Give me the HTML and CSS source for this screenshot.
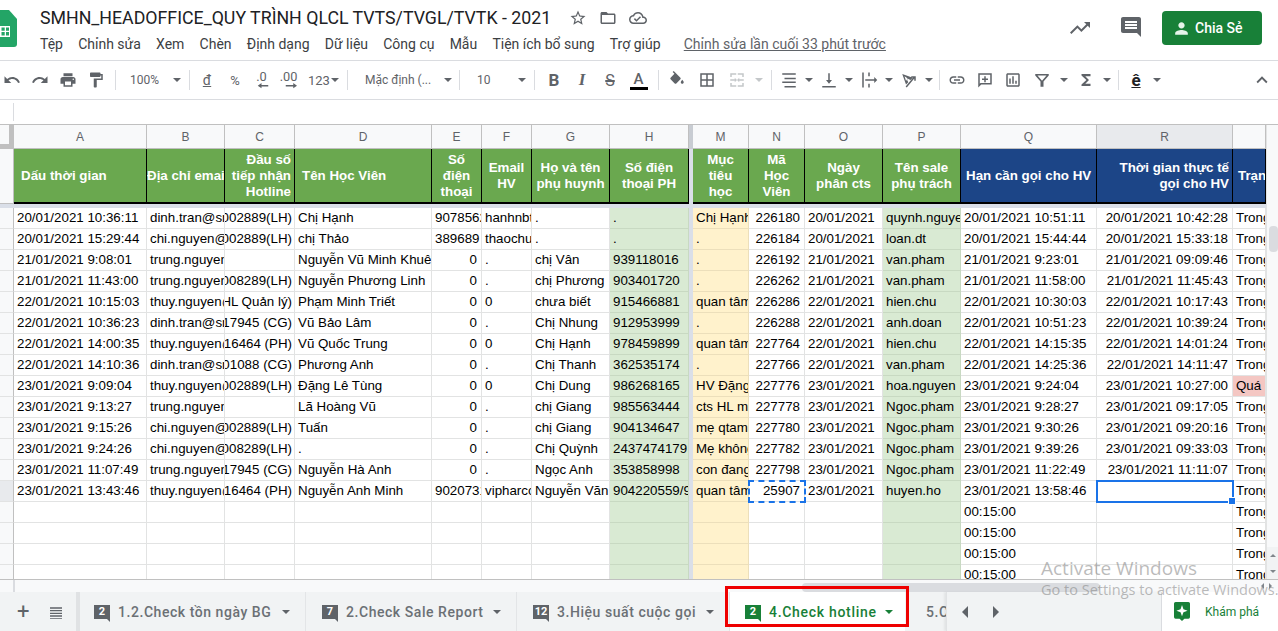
FILE: index.html
```html
<!DOCTYPE html>
<html lang="vi">
<head>
  <meta charset="UTF-8">
  <title>SMHN_HEADOFFICE_QUY TRÌNH QLCL TVTS/TVGL/TVTK - 2021</title>
  <link rel="stylesheet" href="styles.css">
</head>
<body>
  <!-- thanh tiêu đề -->
  <header class="top">
    <svg class="logo" viewBox="8 0 17 37"><path fill="#23a566" d="M3 0h14l8 9v25a3 3 0 0 1-3 3H3a3 3 0 0 1-3-3V3a3 3 0 0 1 3-3z"/><path fill="#fff" d="M8 16h10v11H8z"/><path fill="#23a566" d="M9.500 17.500h3.200v3.200H9.500zM14 17.500h3v3.200h-3zM9.500 22h3.200v3.500H9.500zM14 22h3v3.500h-3z"/></svg>
    <div class="titles">
      <div class="title-row">
        <span class="doc-title">SMHN_HEADOFFICE_QUY TRÌNH QLCL TVTS/TVGL/TVTK - 2021</span>
        <svg class="t-icon t-star" viewBox="0 0 24 24"><path d="M22 9.240l-7.190-.62L12 2 9.190 8.630 2 9.240l5.460 4.730L5.820 21 12 17.270 18.180 21l-1.630-7.030L22 9.240zM12 15.400l-3.760 2.270 1-4.280-3.320-2.880 4.380-.38L12 6.100l1.710 4.040 4.380.38-3.320 2.880 1 4.280L12 15.400z"/></svg>
        <svg class="t-icon" viewBox="0 0 24 24"><path d="M20 6h-8l-2-2H4c-1.100 0-1.990.9-1.990 2L2 18c0 1.100.9 2 2 2h16c1.100 0 2-.9 2-2V8c0-1.100-.9-2-2-2zm0 12H4V8h16v10z"/></svg>
        <svg class="t-icon" viewBox="0 0 24 24"><path d="M19.350 10.040C18.670 6.590 15.640 4 12 4 9.110 4 6.600 5.640 5.350 8.040 2.340 8.360 0 10.910 0 14c0 3.310 2.690 6 6 6h13c2.760 0 5-2.240 5-5 0-2.640-2.050-4.780-4.650-4.960zM19 18H6c-2.210 0-4-1.790-4-4 0-2.050 1.530-3.760 3.560-3.970l1.070-.11.5-.95C8.080 7.140 9.940 6 12 6c2.620 0 4.880 1.860 5.390 4.430l.3 1.500 1.530.11c1.560.1 2.780 1.410 2.780 2.960 0 1.650-1.350 3-3 3zm-9-3.820l-2.090-2.090L6.500 13.500 10 17l6.010-6.010-1.410-1.410z"/></svg>
      </div>
      <nav class="menu">
        <span>Tệp</span><span>Chỉnh sửa</span><span>Xem</span><span>Chèn</span><span>Định dạng</span><span>Dữ liệu</span><span>Công cụ</span><span>Mẫu</span><span>Tiện ích bổ sung</span><span>Trợ giúp</span>
        <a class="last-edit">Chỉnh sửa lần cuối 33 phút trước</a>
      </nav>
    </div>
    <div class="actions">
      <svg class="a-icon" viewBox="0 0 24 24"><path d="M16 6l2.290 2.290-4.880 4.880-4-4L2 16.590 3.410 18l6-6 4 4 6.300-6.290L22 12V6z"/></svg>
      <svg class="a-icon a-comment" viewBox="0 0 24 24"><path d="M21.990 4c0-1.100-.89-2-1.990-2H4c-1.100 0-2 .9-2 2v12c0 1.100.9 2 2 2h14l4 4-.01-18zM18 14H6v-2h12v2zm0-3H6V9h12v2zm0-3H6V6h12v2z"/></svg>
      <button class="share"><svg viewBox="0 0 24 24"><path d="M12 12c2.210 0 4-1.790 4-4s-1.790-4-4-4-4 1.790-4 4 1.790 4 4 4zm0 2c-2.670 0-8 1.340-8 4v2h16v-2c0-2.660-5.330-4-8-4z"/></svg>Chia Sẻ</button>
    </div>
  </header>

  <!-- thanh công cụ -->
  <div class="toolbar">
    <span class="tb"><svg viewBox="0 0 24 24"><path d="M12.500 8c-2.650 0-5.050.99-6.900 2.600L2 7v9h9l-3.620-3.620c1.390-1.160 3.160-1.880 5.120-1.880 3.540 0 6.550 2.310 7.600 5.500l2.370-.78C21.080 11.030 17.150 8 12.500 8z"/></svg></span>
    <span class="tb"><svg viewBox="0 0 24 24"><path d="M18.400 10.600C16.550 8.990 14.150 8 11.500 8c-4.650 0-8.580 3.030-9.960 7.220L3.900 16c1.050-3.190 4.050-5.500 7.600-5.500 1.950 0 3.730.72 5.120 1.880L13 16h9V7l-3.600 3.600z"/></svg></span>
    <span class="tb"><svg viewBox="0 0 24 24"><path d="M19 8H5c-1.660 0-3 1.340-3 3v6h4v4h12v-4h4v-6c0-1.660-1.340-3-3-3zm-3 11H8v-5h8v5zm3-7c-.55 0-1-.45-1-1s.45-1 1-1 1 .45 1 1-.45 1-1 1zm-1-9H6v4h12V3z"/></svg></span>
    <span class="tb"><svg viewBox="0 0 24 24"><path d="M18 4V3c0-.55-.45-1-1-1H5c-.55 0-1 .45-1 1v4c0 .55.45 1 1 1h12c.55 0 1-.45 1-1V6h1v4H9v11c0 .55.45 1 1 1h2c.55 0 1-.45 1-1v-9h8V4h-3z"/></svg></span>
    <i class="sep"></i>
    <span class="tb-txt tb-zoom">100%</span><i class="car"></i>
    <i class="sep"></i>
    <span class="tb tb-letter tb-dong">đ</span>
    <span class="tb tb-letter">%</span>
    <span class="tb"><svg class="dec" viewBox="0 0 24 24"><text x="3" y="13">.0</text><path d="M9 18.500h10v2H9zM5 19.500l5-3.500v7z"/></svg></span>
    <span class="tb"><svg class="dec" viewBox="0 0 24 24"><text x="-3" y="13">.00</text><path d="M5 18.500h10v2H5zM20 19.500l-5-3.500v7z"/></svg></span>
    <span class="tb-txt tb-fmt">123<i class="car-in"></i></span>
    <i class="sep"></i>
    <span class="tb-txt tb-font">Mặc định (...</span><i class="car"></i>
    <i class="sep sep-s"></i>
    <span class="tb-txt tb-size">10</span><i class="car"></i>
    <i class="sep sep-wide"></i>
    <span class="tb tb-letter tb-b">B</span>
    <span class="tb tb-letter tb-i">I</span>
    <span class="tb tb-letter tb-s">S</span>
    <span class="tb tb-letter tb-a"><b>A</b></span>
    <i class="sep"></i>
    <span class="tb tb30"><svg viewBox="0 0 24 24"><path d="M16.560 8.940L7.620 0 6.210 1.410l2.380 2.380-5.150 5.150c-.59.59-.59 1.540 0 2.120l5.500 5.500c.29.29.68.44 1.060.44s.77-.15 1.060-.44l5.500-5.500c.59-.58.59-1.530 0-2.120zM19 11.500s-2 2.170-2 3.500c0 1.100.9 2 2 2s2-.9 2-2c0-1.330-2-3.500-2-3.500z"/></svg></span>
    <span class="tb tb30"><svg viewBox="0 0 24 24"><path d="M3 3v18h18V3H3zm8 16H5v-6h6v6zm0-8H5V5h6v6zm8 8h-6v-6h6v6zm0-8h-6V5h6v6z"/></svg></span>
    <span class="tb tb30 off"><svg viewBox="0 0 24 24"><path d="M3 3h8v2H5v3H3zM13 3h8v5h-2V5h-6zM3 16h2v3h6v2H3zM19 16h2v5h-8v-2h6zM3 11h6V9l3 3-3 3v-2H3zM21 13h-6v2l-3-3 3-3v2h6z"/></svg></span><i class="car off"></i>
    <i class="sep"></i>
    <span class="tb"><svg viewBox="0 0 24 24"><path d="M3 3h18v2H3zM6 9h15v2H6zM3 14h18v2H3zM6 20h15v2H6z"/></svg></span><i class="car car-s"></i>
    <span class="tb"><svg viewBox="0 0 24 24"><path d="M3 20h18v2H3zM11 3h2v9h3l-4 5-4-5h3z"/></svg></span><i class="car car-s"></i>
    <span class="tb"><svg viewBox="0 0 24 24"><path d="M3 2h2v20H3zM11 2h2v5h-2zM11 17h2v5h-2zM7 11h12V8l4 4-4 4v-3H7z"/></svg></span><i class="car car-s"></i>
    <span class="tb"><svg viewBox="0 0 24 24"><path d="M3 4l14 5-3 3-4-2-1 1 2 4-3 3zM6 7l2 6 2-2-1-2zM21 7v6h-2V10L9 22l-1.500-1.500L17.500 8.500H15V7z"/></svg></span><i class="car car-s"></i>
    <i class="sep sep-s"></i>
    <span class="tb"><svg viewBox="0 0 24 24"><path d="M3.900 12c0-1.710 1.390-3.100 3.100-3.100h4V7H7c-2.760 0-5 2.240-5 5s2.240 5 5 5h4v-1.900H7c-1.710 0-3.100-1.390-3.100-3.100zM8 13h8v-2H8v2zm9-6h-4v1.900h4c1.710 0 3.100 1.390 3.100 3.100s-1.390 3.100-3.100 3.100h-4V17h4c2.760 0 5-2.240 5-5s-2.240-5-5-5z"/></svg></span>
    <span class="tb"><svg viewBox="0 0 24 24"><path d="M3 3h18v15H7l-4 4zm2 2v12l1-1h13V5zM11 7h2v3h3v2h-3v3h-2v-3H8v-2h3z"/></svg></span>
    <span class="tb"><svg viewBox="0 0 24 24"><path d="M19 3H5c-1.100 0-2 .9-2 2v14c0 1.100.9 2 2 2h14c1.100 0 2-.9 2-2V5c0-1.100-.9-2-2-2zm0 16H5V5h14v14zM7 10h2v7H7zM11 7h2v10h-2zM15 13h2v4h-2z"/></svg></span>
    <span class="tb tb30"><svg viewBox="0 0 24 24"><path d="M3 4h18v2l-7 8v7h-4v-7L3 6zm3 2l6 7 6-7z"/></svg></span><i class="car"></i>
    <span class="tb tb30"><svg viewBox="0 0 24 24"><path d="M18 4H6v2l6.500 6L6 18v2h12v-3h-7l5-5-5-5h7z"/></svg></span><i class="car car-s"></i>
    <i class="sep"></i>
    <span class="tb tb-letter tb-e">ê</span><i class="car"></i>
    <span class="tb tb-up"><svg viewBox="0 0 24 24"><path d="M12 8l-6 6 1.410 1.410L12 10.830l4.590 4.580L18 14z"/></svg></span>
  </div>

  <div class="formula"><i></i></div>

  <!-- bảng tính -->
  <main class="sheet-wrap">
    <div class="grid">
      <table class="sheet">
        <colgroup>
          <col class="c-h"><col class="c-a"><col class="c-b"><col class="c-c"><col class="c-d"><col class="c-e"><col class="c-f"><col class="c-g"><col class="c-hh"><col class="c-z"><col class="c-m"><col class="c-n"><col class="c-o"><col class="c-p"><col class="c-q"><col class="c-r"><col class="c-s">
        </colgroup>
        <tr class="letters">
          <th class="corner"></th><th>A</th><th>B</th><th>C</th><th>D</th><th>E</th><th>F</th><th>G</th><th>H</th><th class="fz"></th><th>M</th><th>N</th><th>O</th><th>P</th><th>Q</th><th class="on">R</th><th></th>
        </tr>
        <tr class="heads">
          <td class="rh"></td>
          <td class="hg"><div class="l pl7">Dấu thời gian</div></td>
          <td class="hg"><div class="l">Địa chỉ email</div></td>
          <td class="hg"><div class="rt">Đầu số tiếp nhận Hotline</div></td>
          <td class="hg"><div class="l pl7">Tên Học Viên</div></td>
          <td class="hg"><div>Số<br>điện<br>thoại<br>HV</div></td>
          <td class="hg"><div>Email<br>HV</div></td>
          <td class="hg"><div>Họ và tên phụ huynh</div></td>
          <td class="hg"><div>Số điện thoại PH</div></td>
          <td class="fz"></td>
          <td class="hg"><div>Mục<br>tiêu<br>học<br>tập</div></td>
          <td class="hg"><div>Mã<br>Học<br>Viên</div></td>
          <td class="hg"><div>Ngày<br>phân cts</div></td>
          <td class="hg"><div>Tên sale phụ trách</div></td>
          <td class="hb"><div class="l pl5">Hạn cần gọi cho HV</div></td>
          <td class="hb"><div class="rt">Thời gian thực tế gọi cho HV</div></td>
          <td class="hb"><div class="l pl5">Trạng thái</div></td>
        </tr>
        <tr class="gap"><td colspan="17"></td></tr>
        <tr><td class="rh"></td><td>20/01/2021 10:36:11</td><td>dinh.tran@smartcare.vn</td><td class="cl"><bdi>19002889(LH)</bdi></td><td>Chị Hạnh</td><td>907856231</td><td>hanhnbt88@gmail.com</td><td>.</td><td class="g">.</td><td class="fz"></td><td class="y">Chị Hạnh muốn</td><td class="n">226180</td><td>20/01/2021</td><td class="g">quynh.nguyen</td><td>20/01/2021 10:51:11</td><td class="n">20/01/2021 10:42:28</td><td>Trong hạn</td></tr>
        <tr><td class="rh"></td><td>20/01/2021 15:29:44</td><td>chi.nguyen@smartcare.vn</td><td class="cl"><bdi>19002889(LH)</bdi></td><td>chị Thảo</td><td>389689</td><td>thaochu12@gmail.com</td><td>.</td><td class="g">.</td><td class="fz"></td><td class="y">.</td><td class="n">226184</td><td>20/01/2021</td><td class="g">loan.dt</td><td>20/01/2021 15:44:44</td><td class="n">20/01/2021 15:33:18</td><td>Trong hạn</td></tr>
        <tr><td class="rh"></td><td>21/01/2021 9:08:01</td><td>trung.nguyen@smartcare.vn</td><td></td><td>Nguyễn Vũ Minh Khuê</td><td class="n">0</td><td>.</td><td>chị Vân</td><td class="g">939118016</td><td class="fz"></td><td class="y">.</td><td class="n">226192</td><td>21/01/2021</td><td class="g">van.pham</td><td>21/01/2021 9:23:01</td><td class="n">21/01/2021 09:09:46</td><td>Trong hạn</td></tr>
        <tr><td class="rh"></td><td>21/01/2021 11:43:00</td><td>trung.nguyen@smartcare.vn</td><td class="cl"><bdi>19008289(LH)</bdi></td><td>Nguyễn Phương Linh</td><td class="n">0</td><td>.</td><td>chị Phương</td><td class="g">903401720</td><td class="fz"></td><td class="y">.</td><td class="n">226262</td><td>21/01/2021</td><td class="g">van.pham</td><td>21/01/2021 11:58:00</td><td class="n">21/01/2021 11:45:43</td><td>Trong hạn</td></tr>
        <tr><td class="rh"></td><td>22/01/2021 10:15:03</td><td>thuy.nguyen@smartcare.vn</td><td class="cl"><bdi>Hotline HL Quản lý)</bdi></td><td>Phạm Minh Triết</td><td class="n">0</td><td>0</td><td>chưa biết</td><td class="g">915466881</td><td class="fz"></td><td class="y">quan tâm khóa</td><td class="n">226286</td><td>22/01/2021</td><td class="g">hien.chu</td><td>22/01/2021 10:30:03</td><td class="n">22/01/2021 10:17:43</td><td>Trong hạn</td></tr>
        <tr><td class="rh"></td><td>22/01/2021 10:36:23</td><td>dinh.tran@smartcare.vn</td><td class="cl"><bdi>02817945 (CG)</bdi></td><td>Vũ Bảo Lâm</td><td class="n">0</td><td>.</td><td>Chị Nhung</td><td class="g">912953999</td><td class="fz"></td><td class="y">.</td><td class="n">226288</td><td>22/01/2021</td><td class="g">anh.doan</td><td>22/01/2021 10:51:23</td><td class="n">22/01/2021 10:39:24</td><td>Trong hạn</td></tr>
        <tr><td class="rh"></td><td>22/01/2021 14:00:35</td><td>thuy.nguyen@smartcare.vn</td><td class="cl"><bdi>02816464 (PH)</bdi></td><td>Vũ Quốc Trung</td><td class="n">0</td><td>0</td><td>Chị Hạnh</td><td class="g">978459899</td><td class="fz"></td><td class="y">quan tâm khóa</td><td class="n">227764</td><td>22/01/2021</td><td class="g">hien.chu</td><td>22/01/2021 14:15:35</td><td class="n">22/01/2021 14:01:24</td><td>Trong hạn</td></tr>
        <tr><td class="rh"></td><td>22/01/2021 14:10:36</td><td>dinh.tran@smartcare.vn</td><td class="cl"><bdi>19001088 (CG)</bdi></td><td>Phương Anh</td><td class="n">0</td><td>.</td><td>Chị Thanh</td><td class="g">362535174</td><td class="fz"></td><td class="y">.</td><td class="n">227766</td><td>22/01/2021</td><td class="g">van.pham</td><td>22/01/2021 14:25:36</td><td class="n">22/01/2021 14:11:47</td><td>Trong hạn</td></tr>
        <tr><td class="rh"></td><td>23/01/2021 9:09:04</td><td>thuy.nguyen@smartcare.vn</td><td class="cl"><bdi>19002889(LH)</bdi></td><td>Đặng Lê Tùng</td><td class="n">0</td><td>0</td><td>Chị Dung</td><td class="g">986268165</td><td class="fz"></td><td class="y">HV Đặng Lê Tùng</td><td class="n">227776</td><td>23/01/2021</td><td class="g">hoa.nguyen</td><td>23/01/2021 9:24:04</td><td class="n">23/01/2021 10:27:00</td><td class="p">Quá hạn</td></tr>
        <tr><td class="rh"></td><td>23/01/2021 9:13:27</td><td>trung.nguyen@smartcare.vn</td><td></td><td>Lã Hoàng Vũ</td><td class="n">0</td><td>.</td><td>chị Giang</td><td class="g">985563444</td><td class="fz"></td><td class="y">cts HL mới</td><td class="n">227778</td><td>23/01/2021</td><td class="g">Ngoc.pham</td><td>23/01/2021 9:28:27</td><td class="n">23/01/2021 09:17:05</td><td>Trong hạn</td></tr>
        <tr><td class="rh"></td><td>23/01/2021 9:15:26</td><td>chi.nguyen@smartcare.vn</td><td class="cl"><bdi>19002889(LH)</bdi></td><td>Tuấn</td><td class="n">0</td><td>.</td><td>chị Giang</td><td class="g">904134647</td><td class="fz"></td><td class="y">mẹ qtam cho</td><td class="n">227780</td><td>23/01/2021</td><td class="g">Ngoc.pham</td><td>23/01/2021 9:30:26</td><td class="n">23/01/2021 09:20:16</td><td>Trong hạn</td></tr>
        <tr><td class="rh"></td><td>23/01/2021 9:24:26</td><td>chi.nguyen@smartcare.vn</td><td class="cl"><bdi>19008289(LH)</bdi></td><td>.</td><td class="n">0</td><td>.</td><td>Chị Quỳnh</td><td class="g">2437474179</td><td class="fz"></td><td class="y">Mẹ không rõ</td><td class="n">227782</td><td>23/01/2021</td><td class="g">Ngoc.pham</td><td>23/01/2021 9:39:26</td><td class="n">23/01/2021 09:33:03</td><td>Trong hạn</td></tr>
        <tr><td class="rh"></td><td>23/01/2021 11:07:49</td><td>trung.nguyen@smartcare.vn</td><td class="cl"><bdi>02817945 (CG)</bdi></td><td>Nguyễn Hà Anh</td><td class="n">0</td><td>.</td><td>Ngọc Anh</td><td class="g">353858998</td><td class="fz"></td><td class="y">con đang học</td><td class="n">227798</td><td>23/01/2021</td><td class="g">Ngoc.pham</td><td>23/01/2021 11:22:49</td><td class="n">23/01/2021 11:11:07</td><td>Trong hạn</td></tr>
        <tr><td class="rh on"></td><td>23/01/2021 13:43:46</td><td>thuy.nguyen@smartcare.vn</td><td class="cl"><bdi>02816464 (PH)</bdi></td><td>Nguyễn Anh Minh</td><td>902073168</td><td>vipharco@gmail.com</td><td>Nguyễn Văn Hải</td><td class="g">904220559/904</td><td class="fz"></td><td class="y">quan tâm khóa</td><td class="n copied">25907</td><td>23/01/2021</td><td class="g">huyen.ho</td><td>23/01/2021 13:58:46</td><td class="sel"></td><td>Trong hạn</td></tr>
        <tr><td class="rh"></td><td></td><td></td><td></td><td></td><td></td><td></td><td></td><td class="g"></td><td class="fz"></td><td class="y"></td><td></td><td></td><td class="g"></td><td>00:15:00</td><td></td><td>Trong hạn</td></tr>
        <tr><td class="rh"></td><td></td><td></td><td></td><td></td><td></td><td></td><td></td><td class="g"></td><td class="fz"></td><td class="y"></td><td></td><td></td><td class="g"></td><td>00:15:00</td><td></td><td>Trong hạn</td></tr>
        <tr><td class="rh"></td><td></td><td></td><td></td><td></td><td></td><td></td><td></td><td class="g"></td><td class="fz"></td><td class="y"></td><td></td><td></td><td class="g"></td><td>00:15:00</td><td></td><td>Trong hạn</td></tr>
        <tr><td class="rh"></td><td></td><td></td><td></td><td></td><td></td><td></td><td></td><td class="g"></td><td class="fz"></td><td class="y"></td><td></td><td></td><td class="g"></td><td>00:15:00</td><td></td><td>Trong hạn</td></tr>
      </table>
      <div class="vscroll">
        <div class="v-thumb"></div>
        <div class="v-arrows"><i class="up"></i><i class="down"></i></div>
      </div>
    </div>
    <div class="hscroll">
      <div class="h-left"></div>
      <div class="h-thumb"></div>
      <div class="h-arrows"><i class="left"></i><i class="right"></i></div>
    </div>
  </main>

  <!-- các trang tính -->
  <footer class="tabs">
    <div class="tab-tools">
      <span class="plus">+</span>
      <svg viewBox="0 0 24 24"><path d="M3 5h18v2H3zM3 9h18v2H3zM3 13h18v2H3zM3 17h18v2H3zM3 21h18v1H3z"/></svg>
    </div>
    <div class="tab-strip">
      <div class="tab tab1"><span class="badge">2</span>1.2.Check tồn ngày BG<i class="tab-car"></i></div>
      <div class="tab tab2"><span class="badge">7</span>2.Check Sale Report<i class="tab-car"></i></div>
      <div class="tab tab3"><span class="badge">12</span>3.Hiệu suất cuộc gọi<i class="tab-car"></i></div>
      <div class="tab tab4"><span class="badge">2</span>4.Check hotline<i class="tab-car"></i></div>
      <div class="tab tab5">5.Check đơn hàng</div>
    </div>
    <div class="tab-nav"><i class="tri-l"></i><i class="tri-r"></i></div>
    <div class="explore">
      <svg viewBox="0 0 20 24"><path fill="#188038" d="M2 0h16a2 2 0 0 1 2 2v17a2 2 0 0 1-2 2h-5l-3 3-3-3H2a2 2 0 0 1-2-2V2a2 2 0 0 1 2-2z"/><path fill="#fff" d="M10 4l1.800 5.200L17 11l-5.200 1.800L10 18l-1.800-5.200L3 11l5.200-1.800z"/></svg>
      Khám phá
    </div>
  </footer>

  <!-- khung đỏ đánh dấu tab -->
  <div class="red-box"></div>
  <div class="watermark">
    <div class="wm-big">Activate Windows</div>
    <div class="wm-small">Go to Settings to activate Windows.</div>
  </div>
</body>
</html>
```

FILE: styles.css
```css
* {
  box-sizing: border-box;
}

html, body {
  margin: 0;
  height: 631px;
  overflow: hidden;
}

body {
  position: relative;
  background-color: white;
  font-family: Roboto, "Liberation Sans", sans-serif;
  color: #3c4043;
}

/* thanh tiêu đề */
.top {
  display: flex;
  height: 61px;
  border-bottom: 1px solid #dadce0;
}

.logo {
  width: 17px;
  height: 37px;
  margin-top: 10px;
  flex: none;
}

.titles {
  margin-left: 23px;
}

.title-row {
  display: flex;
  align-items: center;
  height: 20px;
  margin-top: 8px;
}

.doc-title {
  font-size: 17.750px;
  color: #202124;
  white-space: nowrap;
}

.t-icon {
  width: 18px;
  height: 18px;
  margin-left: 12px;
  fill: #5f6368;
}

.t-star {
  margin-left: 18px;
}

.menu {
  display: flex;
  align-items: center;
  gap: 15.200px;
  height: 20px;
  margin-top: 6px;
  font-size: 14px;
  color: #3c4043;
  white-space: nowrap;
}

.last-edit {
  margin-left: 8px;
  color: #5f6368;
  text-decoration: underline;
}

.actions {
  display: flex;
  align-items: flex-start;
  margin-left: auto;
  padding-right: 16px;
}

.a-icon {
  width: 24px;
  height: 24px;
  margin-top: 16px;
  fill: #5f6368;
}

.a-comment {
  margin-top: 15px;
  margin-left: 27px;
}

.share {
  display: flex;
  align-items: center;
  width: 100px;
  height: 34px;
  margin-top: 11px;
  margin-left: 19px;
  padding: 0 0 0 10px;
  border: 0;
  border-radius: 4px;
  background-color: #188038;
  color: white;
  font-family: Roboto, sans-serif;
  font-size: 14px;
  font-weight: 500;
}

.share svg {
  width: 19px;
  height: 19px;
  margin-right: 4px;
  fill: #e6f4ea;
}

/* thanh công cụ */
.toolbar {
  display: flex;
  align-items: center;
  height: 39px;
  margin-left: -2px;
  padding-right: 2px;
  border-bottom: 1px solid #dadce0;
  color: #5f6368;
}

.tb {
  display: flex;
  flex: none;
  align-items: center;
  justify-content: center;
  width: 28px;
  height: 24px;
}

.tb svg {
  width: 18px;
  height: 18px;
  fill: #5f6368;
}

.tb30 {
  width: 30px;
}

.off svg {
  fill: #c4c7c9;
}

.tb-txt {
  flex: none;
  font-size: 12px;
  white-space: nowrap;
}

.tb-zoom {
  width: 51px;
  padding-left: 11px;
}

.tb-fmt {
  display: flex;
  align-items: center;
  width: 37px;
  padding-left: 3px;
  font-size: 13px;
}

.tb-font {
  width: 90px;
  padding-left: 14px;
}

.tb-size {
  width: 52px;
  padding-left: 14px;
}

.tb-letter {
  font-size: 13px;
}

.tb-dong {
  font-size: 14px;
  text-decoration: underline;
}

.dec {
  overflow: visible;
}

.dec text {
  font-size: 17px;
  fill: #5f6368;
}

.tb-b {
  font-size: 17px;
  font-weight: 700;
}

.tb-i {
  font-family: "Liberation Serif", serif;
  font-size: 17px;
  font-style: italic;
  font-weight: 700;
}

.tb-s {
  font-size: 16px;
  text-decoration: line-through;
  text-decoration-thickness: 2px;
}

.tb-a {
  width: 29px;
}

.tb-a b {
  display: block;
  width: 18px;
  border-bottom: 3px solid black;
  font-size: 15px;
  font-weight: 500;
  line-height: 16px;
  text-align: center;
}

.tb-e {
  color: #202124;
  font-size: 17px;
  font-weight: 700;
  text-decoration: underline;
}

.tb-up {
  margin-left: auto;
}

.tb-up svg {
  width: 22px;
  height: 22px;
}

.sep {
  flex: none;
  width: 1px;
  height: 20px;
  margin: 0 3px 0 5px;
  background-color: #dadce0;
}

.sep-s {
  margin-left: 4px;
}

.sep-wide {
  margin-right: 5px;
}

.car, .car-in {
  display: block;
  flex: none;
  width: 14px;
  height: 4px;
  position: relative;
}

.car::after, .car-in::after {
  content: "";
  position: absolute;
  left: 3px;
  top: 0;
  border-top: 4px solid #5f6368;
  border-left: 4px solid transparent;
  border-right: 4px solid transparent;
}

.car-s {
  width: 12px;
}

.car-s::after {
  left: 2px;
}

.car.off::after {
  border-top-color: #c4c7c9;
}

.car-in {
  width: 10px;
}

.car-in::after {
  left: 1px;
}

/* thanh công thức */
.formula {
  display: flex;
  align-items: center;
  height: 25px;
  border-bottom: 1px solid #c0c0c0;
}

.formula i {
  width: 1px;
  height: 18px;
  margin-left: 13px;
  background-color: #dadce0;
}

/* bảng tính */
.sheet-wrap {
  height: 467px;
}

.grid {
  display: flex;
  height: 455px;
  overflow: hidden;
  border-bottom: 1px solid #c0c0c0;
}

.sheet {
  flex: none;
  width: 1266px;
  table-layout: fixed;
  border-collapse: separate;
  border-spacing: 0;
  font-family: "Liberation Sans", Arial, sans-serif;
  font-size: 13.330px;
  color: black;
}

.c-h { width: 14px; }
.c-a { width: 133px; }
.c-b { width: 78px; }
.c-c { width: 70px; }
.c-d { width: 137px; }
.c-e { width: 50px; }
.c-f { width: 50px; }
.c-g { width: 78px; }
.c-hh { width: 79px; }
.c-z { width: 4px; }
.c-m { width: 56px; }
.c-n { width: 56px; }
.c-o { width: 78px; }
.c-p { width: 78px; }
.c-q { width: 136px; }
.c-r { width: 136px; }
.c-s { width: 33px; }

.sheet th {
  height: 24px;
  padding: 0;
  border-right: 1px solid #c0c0c0;
  border-bottom: 1px solid #c0c0c0;
  background-color: #f8f9fa;
  color: #5f6368;
  font-size: 12px;
  font-weight: 400;
}

.sheet th.on {
  background-color: #e8eaed;
}

.sheet th.corner {
  border-right: 5px solid #c0c0c0;
  border-bottom: 5px solid #c0c0c0;
}

.sheet td {
  height: 21px;
  padding: 0 3px;
  overflow: hidden;
  border-right: 1px solid #e2e3e3;
  border-bottom: 1px solid #e2e3e3;
  line-height: 16px;
  white-space: nowrap;
}

.sheet td.rh {
  padding: 0;
  background-color: #f8f9fa;
  border-right: 1px solid #c0c0c0;
}

.sheet td.rh.on {
  background-color: #e8eaed;
}

.sheet .fz {
  padding: 0;
  border-right: 0;
  border-bottom: 0;
  background-color: #dadfe8;
}

.sheet th.fz {
  background-color: #c8ccd2;
}

.sheet td.n {
  padding-right: 4px;
  text-align: right;
}

/* ô bị tràn thì cắt bên trái */
.sheet td.cl {
  direction: rtl;
  text-align: right;
}

.sheet td.g {
  background-color: #d9ead3;
  border-color: #c8d9c2;
}

.sheet td.y {
  background-color: #fff2cc;
  border-color: #ecdfbb;
}

.sheet td.p {
  background-color: #f4c7c3;
}

.sheet td.sel {
  position: relative;
  overflow: visible;
  outline: 2px solid #1a73e8;
  outline-offset: -1px;
}

.sheet td.sel::after {
  content: "";
  position: absolute;
  right: -3px;
  bottom: -3px;
  width: 6px;
  height: 6px;
  background-color: #1a73e8;
  border: 1px solid white;
  box-sizing: content-box;
  margin: -1px;
}

.sheet td.copied {
  outline: 2px dashed #1a73e8;
  outline-offset: -1px;
}

/* dòng tiêu đề */
.heads td {
  height: 55px;
  padding: 0;
  border-right: 1px solid black;
  border-bottom: 2px solid black;
  color: white;
  font-weight: 700;
}

.heads td.rh {
  border-bottom: 1px solid #c0c0c0;
}

.heads td.hg {
  background-color: #6aa84f;
}

.heads td.hb {
  background-color: #1c4587;
}

.heads td > div {
  display: flex;
  align-items: safe center;
  justify-content: center;
  height: 53px;
  padding: 3px 3px 2px;
  overflow: hidden;
  text-align: center;
  white-space: normal;
}

.heads td > div.l {
  justify-content: flex-start;
  padding: 0;
  text-align: left;
  white-space: nowrap;
}

.heads td > div.rt {
  justify-content: flex-end;
  text-align: right;
}

.heads td > div.pl7 {
  padding-left: 7px;
}

.heads td > div.pl5 {
  padding-left: 5px;
}

.sheet .gap td {
  height: 4px;
  padding: 0;
  border: 0;
  background-color: #dadfe8;
  line-height: 0;
}

/* thanh cuộn */
.vscroll {
  display: flex;
  flex: 1;
  flex-direction: column;
  background-color: #f8f9fa;
  border-left: 1px solid #e2e3e3;
}

.v-thumb {
  width: 9px;
  height: 26px;
  margin: 101px 0 0 2px;
  border-radius: 4px;
  background-color: #dadce0;
}

.v-arrows {
  display: flex;
  flex-direction: column;
  justify-content: space-around;
  align-items: center;
  height: 32px;
  margin-top: auto;
  background-color: #f1f3f4;
}

.up, .down, .left, .right {
  display: block;
  width: 0;
  height: 0;
  border: 3px solid transparent;
}

.up {
  border-top: 0;
  border-bottom-color: #80868b;
}

.down {
  border-bottom: 0;
  border-top-color: #80868b;
}

.left {
  border-left: 0;
  border-right-color: #80868b;
}

.right {
  border-right: 0;
  border-left-color: #80868b;
}

.hscroll {
  display: flex;
  height: 12px;
  background-color: #f8f9fa;
}

.h-left {
  width: 15px;
  border-right: 2px solid #dadce0;
}

.h-thumb {
  width: 298px;
  height: 9px;
  margin: 3px 0 0 787px;
  border-radius: 4px;
  background-color: #dadce0;
}

.h-arrows {
  display: flex;
  align-items: center;
  gap: 5px;
  margin-left: auto;
  padding-right: 6px;
}

/* các trang tính */
.tabs {
  display: flex;
  height: 39px;
  background-color: #f1f3f4;
  font-size: 14px;
  font-weight: 500;
  letter-spacing: 0.550px;
  color: #6b7075;
  white-space: nowrap;
}

.tab-tools {
  display: flex;
  flex: none;
  align-items: center;
  width: 80px;
  padding-left: 17px;
  border-right: 4px solid #e0e2e4;
}

.plus {
  font-size: 22px;
  font-weight: 400;
  line-height: 1;
  color: #5f6368;
}

.tab-tools svg {
  width: 16px;
  height: 16px;
  margin-left: 18px;
  fill: #5f6368;
}

.tab-strip {
  display: flex;
  width: 866px;
  overflow: hidden;
}

.tab {
  display: flex;
  flex: none;
  align-items: center;
  height: 39px;
  padding-left: 14px;
  border-right: 1px solid #e3e5e7;
}

.tab1 { width: 226px; }
.tab2 { width: 211px; padding-left: 16px; }
.tab3 { width: 213px; padding-left: 16px; }

.tab4 {
  width: 175px;
  margin-right: 21px;
  padding-left: 15px;
  border-right: 0;
  background-color: white;
  color: #188038;
  letter-spacing: 0.700px;
}

.tab5 {
  padding-left: 0;
  border-right: 0;
}

.badge {
  position: relative;
  display: block;
  flex: none;
  width: 16px;
  height: 14px;
  margin-right: 8px;
  background-color: #5f6368;
  color: white;
  font-size: 11px;
  font-weight: 700;
  letter-spacing: 0;
  line-height: 14px;
  text-align: center;
}

.badge::after {
  content: "";
  position: absolute;
  right: 0;
  bottom: -3px;
  border-top: 3px solid #5f6368;
  border-left: 3px solid transparent;
}

.tab4 .badge {
  background-color: #188038;
}

.tab4 .badge::after {
  border-top-color: #188038;
}

.tab-car {
  display: block;
  width: 0;
  height: 0;
  margin-left: auto;
  margin-right: 15px;
  border-top: 4px solid #5f6368;
  border-left: 4px solid transparent;
  border-right: 4px solid transparent;
}

.tab4 .tab-car {
  margin-right: 12px;
  border-top-color: #188038;
}

.tab-nav {
  display: flex;
  align-items: center;
  width: 215px;
  padding-left: 15px;
  border-left: 1px solid #e0e2e4;
  box-shadow: -2px 0 2px rgba(0, 0, 0, 0.06);
}

.tri-l, .tri-r {
  display: block;
  width: 0;
  height: 0;
  border-top: 6px solid transparent;
  border-bottom: 6px solid transparent;
}

.tri-l {
  border-right: 6px solid #5f6368;
}

.tri-r {
  margin-left: 25px;
  border-left: 6px solid #5f6368;
}

.explore {
  display: flex;
  flex: 1;
  align-items: center;
  padding-left: 12px;
  border-left: 1px solid #dadce0;
  background-color: white;
  color: #188038;
  font-size: 12px;
  font-weight: 400;
  letter-spacing: 0;
}

.explore svg {
  width: 16px;
  height: 21px;
  margin-right: 15px;
}

/* phần nằm đè lên giao diện */
.red-box {
  position: absolute;
  left: 725px;
  top: 586px;
  width: 184px;
  height: 41px;
  border: 3px solid #ee0000;
}

.watermark {
  position: absolute;
  left: 1041px;
  top: 556px;
  font-family: "Open Sans", sans-serif;
  color: rgba(120, 120, 120, 0.5);
  white-space: nowrap;
}

.wm-big {
  font-size: 19px;
  line-height: 24px;
}

.wm-small {
  margin-top: 1px;
  font-size: 14.500px;
  line-height: 18px;
}
```
